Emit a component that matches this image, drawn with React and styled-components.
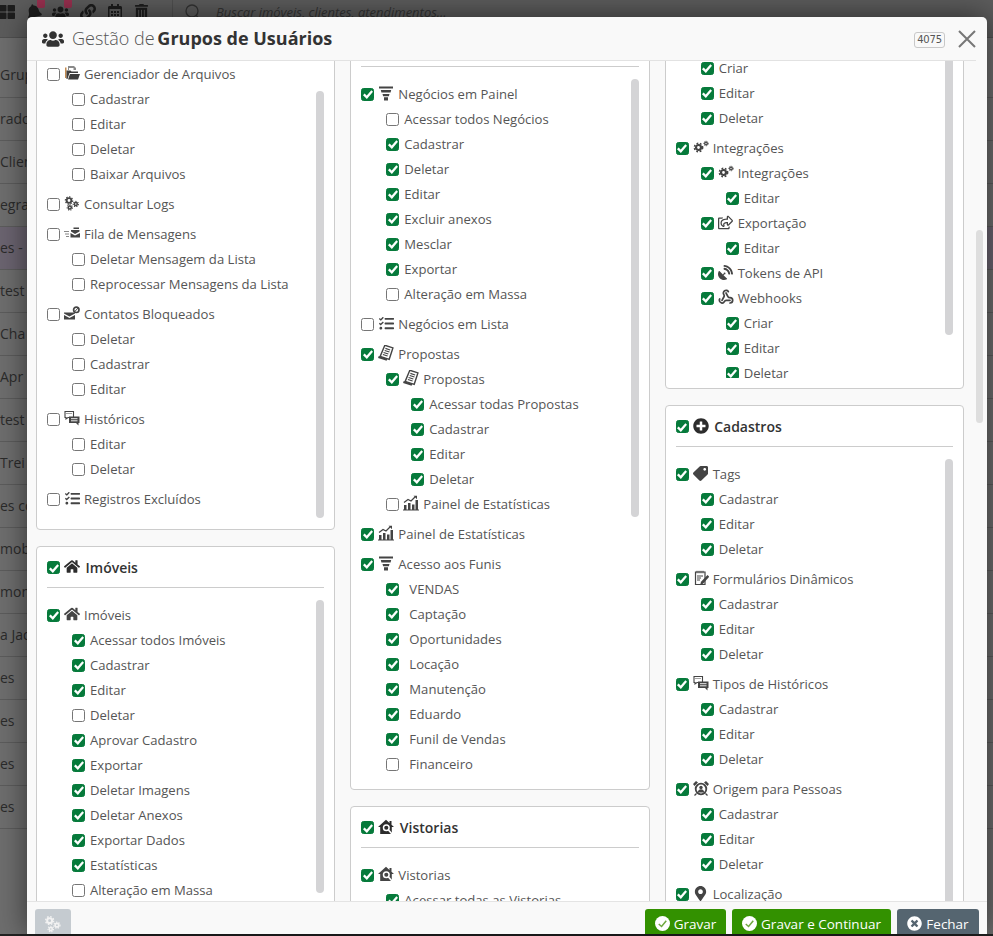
import React from "react";
import styled, { createGlobalStyle } from "styled-components";
import { FaUsers, FaHome, FaTasks, FaRegShareSquare, FaSatelliteDish, FaTag, FaMapMarkerAlt, FaPlusCircle, FaTimesCircle, FaThLarge, FaBell, FaLink, FaRegCalendarAlt, FaTrashAlt } from "react-icons/fa";
import { Webhook } from "lucide-react";

const Global = createGlobalStyle`
  html, body { margin: 0; padding: 0; height: 100%; overflow: hidden; }
  body { font-family: "Open Sans", "Noto Sans", sans-serif; font-size: 13.1px; background: #6b6b6b; }
`;

const Page = styled.div`
  position: relative;
  width: 993px;
  height: 936px;
  overflow: hidden;
  background: #6e6e6e;
`;
const TopBar = styled.div`
  display: flex;
  align-items: flex-start;
  height: 38px;
  box-sizing: border-box;
  color: #1d1d1d;
  background: #5c5c5c;
  border-bottom: 1px solid #505050;
`;
const TopIcons = styled.div`
  display: flex;
  width: 179px;
  margin-left: -7px;
  flex: none;
`;
const TopIcon = styled.span`
  position: relative;
  width: 27px;
  height: 20px;
  margin-top: 4px;
  display: flex;
  justify-content: center;
  flex: none;
`;
const Badge = styled.span`
  position: absolute;
  left: 17px;
  top: -5px;
  width: 8px;
  height: 9px;
  border-radius: 2px;
  background: #98304f;
`;
const SearchZone = styled.div`
  display: flex;
  align-items: center;
  gap: 17px;
  padding-left: 12px;
  border-left: 1px solid #4f4f4f;
  font: italic 13px "Open Sans", sans-serif;
  color: #333;
  height: 24px;
  white-space: nowrap;
`;
const BgRows = styled.div`
  display: flex;
  flex-direction: column;
`;
const BgRow = styled.div`
  height: ${(p) => p.$h}px;
  line-height: ${(p) => p.$lh}px;
  box-sizing: border-box;
  border-bottom: 1px solid #5c5c5c;
  color: #2b2b2b;
  font-size: 14px;
  white-space: nowrap;
  background: ${(p) => (p.$hi ? "#6b6470" : "transparent")};
`;
const Dark = styled.div`
  position: absolute;
  left: 0;
  right: 0;
  bottom: 0;
  height: 2px;
  background: #222;
`;

const Modal = styled.div`
  position: absolute;
  left: 27px;
  top: 17px;
  width: 960px;
  height: 917px;
  display: flex;
  flex-direction: column;
  background: #f9f9f9;
  border-radius: 5px 5px 0 0;
  box-shadow: 0 0 30px rgba(0, 0, 0, 0.55);
  overflow: hidden;
`;
const Header = styled.header`
  flex: none;
  height: 43px;
  margin-right: 11px;
  padding: 0 0 0 15px;
  display: flex;
  align-items: center;
  border-bottom: 1px solid #e2e2e2;
`;
const Title = styled.h1`
  margin: -2px 0 0 8px;
  flex: 1;
  font-size: 18px;
  font-weight: 300;
  color: #555;
  white-space: nowrap;
  & b { color: #333; font-weight: 700; margin-left: -2px; }
`;
const Code = styled.span`
  width: 31px;
  height: 16px;
  box-sizing: border-box;
  margin-top: 2px;
  border: 1px solid #c8c8c8;
  border-radius: 3px;
  font: 10px/14px "DejaVu Sans", sans-serif;
  color: #555;
  text-align: center;
  letter-spacing: -0.2px;
`;
const Close = styled.svg`
  width: 18px;
  height: 18px;
  margin: 1px 0 0 13px;
  flex: none;
`;
const Body = styled.main`
  flex: 1;
  min-height: 0;
  overflow: hidden;
  padding-left: 9px;
`;
const Columns = styled.div`
  display: grid;
  grid-template-columns: repeat(3, 1fr);
  column-gap: 15px;
  width: 928px;
  align-items: start;
`;
const Column = styled.div`
  display: flex;
  flex-direction: column;
  gap: 16px;
  margin-top: ${(p) => p.$offset}px;
`;
const Card = styled.section`
  box-sizing: border-box;
  background: #fff;
  border: 1px solid #ccc;
  border-radius: 4px;
  padding: 8px 10px 10px;
`;
const CardHead = styled.div`
  display: flex;
  align-items: center;
  height: 25px;
  font-size: 14px;
  font-weight: 600;
  color: #333;
`;
const HeadText = styled.span`
  margin-left: 1.5px;
`;
const Divider = styled.hr`
  margin: ${(p) => (p.$bare ? 0 : "7px")} 0 12px;
  border: 0;
  border-top: 1px solid #ccc;
`;
const Scroller = styled.div`
  position: relative;
  height: ${(p) => p.$h}px;
  overflow: hidden;
  padding-top: 2.5px;
  box-sizing: border-box;
`;
const Thumb = styled.div`
  position: absolute;
  right: 0;
  top: ${(p) => p.$top}px;
  width: 8px;
  height: ${(p) => p.$h}px;
  border-radius: 4px;
  background: #d4d4d6;
`;
const Row = styled.div`
  display: flex;
  align-items: center;
  height: 25px;
  padding-left: ${(p) => p.$level * 25}px;
  margin-top: ${(p) => (p.$gap ? 5 : 0)}px;
  color: #555;
  white-space: nowrap;
`;
const Box = styled.span`
  width: 13px;
  height: 13px;
  flex: none;
  box-sizing: border-box;
  border-radius: 2.5px;
  border: 1px solid ${(p) => (p.$on ? "#067a3b" : "#767676")};
  background: ${(p) => (p.$on ? "#067a3b" : "#fff")};
  display: inline-flex;
  align-items: center;
  justify-content: center;
`;
const IconSlot = styled.span`
  width: 16px;
  height: 16px;
  margin: -2px 4px 0;
  flex: none;
  display: inline-flex;
  align-items: center;
  justify-content: center;
  color: ${(p) => p.$color || "#444"};
`;
const Label = styled.span`
  margin-left: ${(p) => (p.$icon ? 0 : 5 + (p.$indent || 0))}px;
  position: relative;
  top: -0.5px;
`;
const OuterThumb = styled.div`
  position: absolute;
  right: 4px;
  top: 213px;
  width: 7px;
  height: 193px;
  border-radius: 4px;
  background: #dedede;
`;
const Footer = styled.footer`
  flex: none;
  height: 33px;
  box-sizing: border-box;
  display: flex;
  gap: 6px;
  padding: 7px 8px 0 8px;
  border-top: 1px solid #e4e4e4;
  overflow: hidden;
`;
const Btn = styled.button`
  height: 30px;
  padding: 0;
  width: ${(p) => p.$w}px;
  margin-left: ${(p) => (p.$push ? "auto" : 0)};
  border: 0;
  border-radius: 3px;
  background: ${(p) => p.$bg};
  color: #fff;
  font: 13.5px "Open Sans", sans-serif;
  display: flex;
  align-items: center;
  justify-content: center;
  gap: 4px;
  flex: none;
  white-space: nowrap;
  padding-bottom: 1px;
`;

const Check = () => (
  <svg width="10" height="10" viewBox="0 0 10 10"><path d="M.8 5.400 3.800 8.300 9.200 2" fill="none" stroke="#fff" strokeWidth="2.300" /></svg>
);
const G = ({ x, y, r, w }) => (
  <g>
    <circle cx={x} cy={y} r={r} fill="none" stroke="currentColor" strokeWidth={w} />
    <circle cx={x} cy={y} r={r + w * 0.75} fill="none" stroke="currentColor" strokeWidth={w * 0.7} strokeDasharray={`${w * 0.8} ${w * 0.75}`} />
  </g>
);
const S = ({ children }) => <svg width="16" height="16" viewBox="0 0 16 16" fill="currentColor">{children}</svg>;

const icons = {
  folder: <S><path d="M4 1h6l2 2v2H9.500V3H5v2H4z" fill="#8a8a8a" /><path d="M1 2.500h1.500V13H1z" fill="#c28a50" /><path d="M2.500 5.500h4l1 1H14V8H5.500L3.500 14h-1z" fill="#3d3d3d" /><path d="M6 9h10l-2 5.500H4z" fill="#3d3d3d" /></S>,
  logs: <S><G x={5} y={5.500} r={2.300} w={1.800} /><G x={11.800} y={9} r={1.500} w={1.500} /><G x={5.800} y={12.500} r={1.500} w={1.500} /></S>,
  queue: <S><path d="M0 6h5v1H0zM1 8.500h4v1H1zM2 11h3v1H2z" fill="#888" /><path d="M7 5h8.500v1.500L11 9 7 6.500zM6.500 8 11 10.500 16 8v4.500H6.500z" /><path d="M9.500 2.500H15V4H9.500z" /></S>,
  blocked: <S><path d="M0 7.500h11v1L5.500 11.500 0 8.500zM0 10l5.500 3L11 10v4.500H0z" /><circle cx="12.300" cy="4.800" r="2.700" fill="none" stroke="currentColor" strokeWidth="1.700" /><path d="M10.500 6.800l3.800-4" stroke="currentColor" /></S>,
  chat: <S><path d="M1 1.500h8.500v6H4L2 9V7.500H1z" fill="none" stroke="currentColor" strokeWidth="1.100" /><path d="M2.500 3.500h1M4.500 3.500h1M6.500 3.500h1" stroke="currentColor" /><path d="M5 6.500h10.500V13H14.500v2.500L12 13H5z" /><path d="M7 8.700h6.500M7 10.800h6.500" stroke="#fff" strokeWidth=".9" /></S>,
  tasks: <FaTasks size={15} />,
  home: <FaHome size={16} />,
  funnel: <S><path d="M1 1.500h14V3.500H1zM2.800 5h10.400l-.6 2.500H3.400zM4.500 9h7l-.6 2.300H5.100zM6 12.300h4V15.500H6z" /></S>,
  prop: <S><g transform="rotate(18 8 8)"><path d="M4.500 1h8.500v12H3.500z" fill="#fff" stroke="currentColor" strokeWidth="1.400" /><path d="M2 13h9v2.200H2z" /><path d="M6 3.800h5M6 6h5M5.500 8.200h5M5.500 10.400h5" stroke="currentColor" strokeWidth="1.100" /></g></S>,
  stats: <S><path d="M1 10h2.500v4.500H1zM5 8h2.500v6.500H5zM9 9.500h2.500v5H9zM12.500 5H15v9.500h-2.500zM0 14.500h16v1H0z" /><path d="M1 7.500 5 4.500l3 1.500 4-4" fill="none" stroke="currentColor" strokeWidth="1.200" /><path d="M10.500.8h3.500v3.500z" /></S>,
  vist: <S><path d="M8 .8 0 8h2.200v7h11.600V8H16l-2.500-2.300V2h-2v1.900z" /><circle cx="8.300" cy="8.800" r="2.800" fill="currentColor" stroke="#fff" strokeWidth="1.500" /><path d="M10.500 11l3.500 4" stroke="#fff" strokeWidth="1.700" /></S>,
  gears: <S><G x={5.500} y={8.500} r={2.500} w={2.200} /><G x={13} y={4.500} r={1.300} w={1.300} /></S>,
  share: <FaRegShareSquare size={15} />,
  dish: <FaSatelliteDish size={15} />,
  hook: <Webhook size={16} strokeWidth={2.6} />,
  tag: <FaTag size={15} style={{ transform: "rotate(90deg)" }} />,
  form: <S><path d="M2.500 2h9.500v12.500H2.500z" fill="none" stroke="currentColor" strokeWidth="1.200" /><path d="M4 .8v2.500M6 .8v2.500M8 .8v2.500M10 .8v2.500M4 6h6M4 8h4M4 10h3" stroke="currentColor" /><path d="M14.500 5 16.200 6.700l-6.200 7-2.800 1 .8-3z" /></S>,
  alarm: <S><circle cx="8" cy="9" r="5.300" fill="none" stroke="currentColor" strokeWidth="1.800" /><circle cx="8" cy="7.500" r="1.700" /><path d="M4.800 12.500c0-4.500 6.400-4.500 6.400 0z" /><path d="M0 4 3 1l2 1.500L1.500 6zM16 4 13 1l-2 1.500L14.500 6z" /><path d="M3.500 13.500 1.500 15.500M12.500 13.500l2 2" stroke="currentColor" strokeWidth="1.300" /></S>,
  pin: <FaMapMarkerAlt size={15} />,
};
icons.list = icons.tasks;

const r = (level, label, on, extra = {}) => ({ level, label, on, ...extra });
const crud = (on = 1) => [r(1, "Cadastrar", on), r(1, "Editar", on), r(1, "Deletar", on)];

const leftA = [
  r(0, "Gerenciador de Arquivos", 0, { icon: "folder" }),
  r(1, "Cadastrar", 0), r(1, "Editar", 0), r(1, "Deletar", 0), r(1, "Baixar Arquivos", 0),
  r(0, "Consultar Logs", 0, { icon: "logs" }),
  r(0, "Fila de Mensagens", 0, { icon: "queue" }),
  r(1, "Deletar Mensagem da Lista", 0), r(1, "Reprocessar Mensagens da Lista", 0),
  r(0, "Contatos Bloqueados", 0, { icon: "blocked" }),
  r(1, "Deletar", 0), r(1, "Cadastrar", 0), r(1, "Editar", 0),
  r(0, "Históricos", 0, { icon: "chat" }),
  r(1, "Editar", 0), r(1, "Deletar", 0),
  r(0, "Registros Excluídos", 0, { icon: "tasks" }),
];
const leftB = [
  r(0, "Imóveis", 1, { icon: "home" }),
  r(1, "Acessar todos Imóveis", 1), r(1, "Cadastrar", 1), r(1, "Editar", 1), r(1, "Deletar", 0),
  r(1, "Aprovar Cadastro", 1), r(1, "Exportar", 1), r(1, "Deletar Imagens", 1), r(1, "Deletar Anexos", 1),
  r(1, "Exportar Dados", 1), r(1, "Estatísticas", 1), r(1, "Alteração em Massa", 0),
];
const midA = [
  r(0, "Negócios em Painel", 1, { icon: "funnel" }),
  r(1, "Acessar todos Negócios", 0), r(1, "Cadastrar", 1), r(1, "Deletar", 1), r(1, "Editar", 1),
  r(1, "Excluir anexos", 1), r(1, "Mesclar", 1), r(1, "Exportar", 1), r(1, "Alteração em Massa", 0),
  r(0, "Negócios em Lista", 0, { icon: "list" }),
  r(0, "Propostas", 1, { icon: "prop" }),
  r(1, "Propostas", 1, { icon: "prop" }),
  r(2, "Acessar todas Propostas", 1), r(2, "Cadastrar", 1), r(2, "Editar", 1), r(2, "Deletar", 1),
  r(1, "Painel de Estatísticas", 0, { icon: "stats" }),
  r(0, "Painel de Estatísticas", 1, { icon: "stats" }),
  r(0, "Acesso aos Funis", 1, { icon: "funnel" }),
  ...["VENDAS", "Captação", "Oportunidades", "Locação", "Manutenção", "Eduardo", "Funil de Vendas"].map((t) => r(1, t, 1, { indent: 5 })),
  r(1, "Financeiro", 0, { indent: 5 }),
];
const midB = [
  r(0, "Vistorias", 1, { icon: "vist" }),
  r(1, "Acessar todas as Vistorias", 1),
];
const rightA = [
  r(1, "Criar", 1), r(1, "Editar", 1), r(1, "Deletar", 1),
  r(0, "Integrações", 1, { icon: "gears" }),
  r(1, "Integrações", 1, { icon: "gears" }), r(2, "Editar", 1),
  r(1, "Exportação", 1, { icon: "share" }), r(2, "Editar", 1),
  r(1, "Tokens de API", 1, { icon: "dish" }),
  r(1, "Webhooks", 1, { icon: "hook" }), r(2, "Criar", 1), r(2, "Editar", 1), r(2, "Deletar", 1),
];
const rightB = [
  r(0, "Tags", 1, { icon: "tag" }), ...crud(),
  r(0, "Formulários Dinâmicos", 1, { icon: "form" }), ...crud(),
  r(0, "Tipos de Históricos", 1, { icon: "chat" }), ...crud(),
  r(0, "Origem para Pessoas", 1, { icon: "alarm" }), ...crud(),
  r(0, "Localização", 1, { icon: "pin" }),
];

const Rows = ({ items }) =>
  items.map((it, i) => (
    <Row key={i} $level={it.level} $gap={it.level === 0 && i > 0}>
      <Box $on={!!it.on}>{it.on ? <Check /> : null}</Box>
      {it.icon ? <IconSlot>{icons[it.icon]}</IconSlot> : null}
      <Label $icon={!!it.icon} $indent={it.indent}>{it.label}</Label>
    </Row>
  ));

const Head = ({ icon, children }) => (
  <>
    <CardHead>
      <Box $on><Check /></Box>
      <IconSlot $color="#2c2c2c">{icon}</IconSlot>
      <HeadText>{children}</HeadText>
    </CardHead>
    <Divider />
  </>
);

const bg = [
  ["Grup", 0, 60, 74], ["rado", 0], ["Clien", 0], ["egra", 0], ["es - P", 1], ["test", 0], ["Cha", 0], ["Apr", 0], ["test", 0],
  ["Trei", 0], ["es co", 0], ["mob", 0], ["mons", 0], ["a Jaq", 0], ["es", 0], ["es", 0], ["es", 0], ["es", 0],
];

export default function App() {
  return (
    <Page>
      <Global />
      <TopBar>
        <TopIcons>
          <TopIcon><FaThLarge size={16} /></TopIcon>
          <TopIcon><FaBell size={16} style={{ transform: "rotate(-14deg)" }} /><Badge /></TopIcon>
          <TopIcon><FaUsers size={17} /><Badge /></TopIcon>
          <TopIcon><FaLink size={16} /></TopIcon>
          <TopIcon><FaRegCalendarAlt size={16} /></TopIcon>
          <TopIcon><FaTrashAlt size={15} /></TopIcon>
        </TopIcons>
        <SearchZone>
          <svg width="14" height="16" viewBox="0 0 14 16"><circle cx="7" cy="7" r="6" fill="none" stroke="#333" strokeWidth="1.300" /><path d="M11 11l3 4" stroke="#333" strokeWidth="1.300" /></svg>
          Buscar imóveis, clientes, atendimentos...
        </SearchZone>
      </TopBar>
      <BgRows>
        {bg.map(([t, hi, h, lh], i) => <BgRow key={i} $hi={!!hi} $h={h || 43} $lh={lh || 41}>{t}</BgRow>)}
      </BgRows>
      <Dark />
      <Modal>
        <Header>
          <FaUsers size={22} color="#333" />
          <Title>Gestão de <b>Grupos de Usuários</b></Title>
          <Code>4075</Code>
          <Close viewBox="0 0 18 18"><path d="M1 1 17 17M17 1 1 17" stroke="#777" strokeWidth="2" fill="none" /></Close>
        </Header>
        <Body>
          <Columns>
            <Column $offset={-11}>
              <Card>
                <Scroller $h={460}>
                  <Rows items={leftA} />
                  <Thumb $top={32} $h={427} />
                </Scroller>
              </Card>
              <Card>
                <Head icon={<FaHome size={17} />}>Imóveis</Head>
                <Scroller $h={340}>
                  <Rows items={leftB} />
                  <Thumb $top={0} $h={293} />
                </Scroller>
              </Card>
            </Column>
            <Column $offset={-4}>
              <Card>
                <Divider $bare />
                <Scroller $h={700}>
                  <Rows items={midA} />
                  <Thumb $top={0} $h={438} />
                </Scroller>
              </Card>
              <Card>
                <Head icon={icons.vist}>Vistorias</Head>
                <Scroller $h={120}>
                  <Rows items={midB} />
                </Scroller>
              </Card>
            </Column>
            <Column $offset={-17}>
              <Card>
                <Scroller $h={325}>
                  <Rows items={rightA} />
                  <Thumb $top={0} $h={282} />
                </Scroller>
              </Card>
              <Card>
                <Head icon={<FaPlusCircle size={16} />}>Cadastros</Head>
                <Scroller $h={480}>
                  <Rows items={rightB} />
                  <Thumb $top={0} $h={470} />
                </Scroller>
              </Card>
            </Column>
          </Columns>
        </Body>
        <OuterThumb />
        <Footer>
          <Btn $bg="#c5cbd0" $w={36} aria-label="Configurações">
            <svg width="18" height="18" viewBox="0 0 16 16" fill="#f2f2f2" color="#f2f2f2"><G x={5} y={5} r={2.2} w={1.8} /><G x={11.500} y={9} r={1.6} w={1.5} /><G x={6} y={12.5} r={1.4} w={1.4} /></svg>
          </Btn>
          <Btn $bg="#339100" $w={81} $push>
            <OkIcon />Gravar
          </Btn>
          <Btn $bg="#339100" $w={159}>
            <OkIcon />Gravar e Continuar
          </Btn>
          <Btn $bg="#556570" $w={82}>
            <FaTimesCircle size={15} />Fechar
          </Btn>
        </Footer>
      </Modal>
    </Page>
  );
}

function OkIcon() {
  return (
    <svg width="15" height="15" viewBox="0 0 16 16">
      <circle cx="8" cy="8" r="8" fill="#fff" />
      <path d="M4 8.500 7 11.200 12 5" fill="none" stroke="#6fa83f" strokeWidth="1.600" />
    </svg>
  );
}
